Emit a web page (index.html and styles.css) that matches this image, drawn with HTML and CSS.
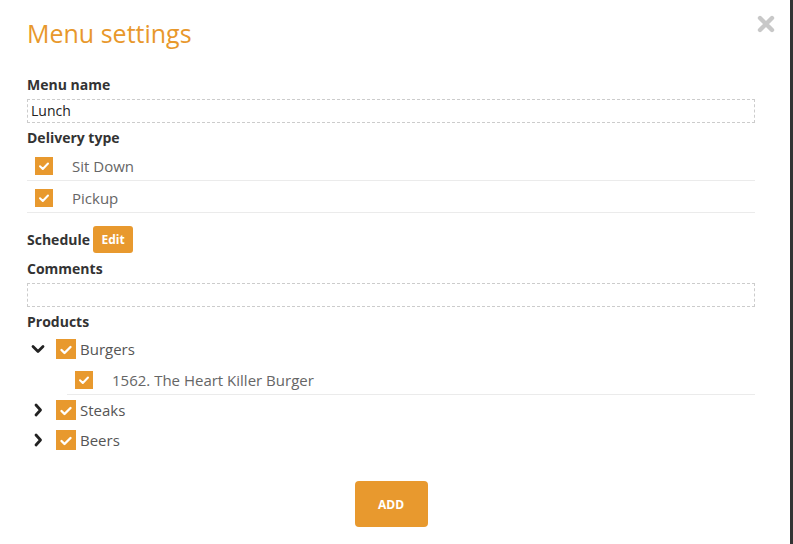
FILE: index.html
```html
<!DOCTYPE html>
<html>
<head>
<meta charset="utf-8">
<link rel="stylesheet" href="styles.css">
</head>
<body>
<div class="modal">
  <button class="close" aria-label="close">
    <svg width="18" height="18" viewBox="0 0 18 18"><path d="M3 3 L15 15 M15 3 L3 15" stroke="#c8c8c8" stroke-width="4.4" stroke-linecap="round"/></svg>
  </button>
  <h1 class="title">Menu settings</h1>

  <div class="label lbl-first">Menu name</div>
  <div class="input">Lunch</div>

  <div class="label lbl-delivery">Delivery type</div>
  <div class="row row-first">
    <span class="cb"><svg width="18" height="18" viewBox="0 0 18 18"><path d="M5 9.2 L7.8 12 L13 6.5" fill="none" stroke="#fff" stroke-width="2" stroke-linecap="round" stroke-linejoin="round"/></svg></span>
    <span class="row-text">Sit Down</span>
  </div>
  <div class="row">
    <span class="cb"><svg width="18" height="18" viewBox="0 0 18 18"><path d="M5 9.2 L7.8 12 L13 6.5" fill="none" stroke="#fff" stroke-width="2" stroke-linecap="round" stroke-linejoin="round"/></svg></span>
    <span class="row-text">Pickup</span>
  </div>

  <div class="schedule">
    <span class="label">Schedule</span>
    <button class="edit">Edit</button>
  </div>

  <div class="label lbl-comments">Comments</div>
  <div class="input"></div>

  <div class="label lbl-products">Products</div>
  <div class="tree">
    <div class="node">
      <span class="chev"><svg width="14" height="10" viewBox="0 0 14 10"><path d="M2 2.5 L7 7.5 L12 2.5" fill="none" stroke="#222" stroke-width="2.8" stroke-linecap="round" stroke-linejoin="round"/></svg></span>
      <span class="cb cb-lg"><svg width="20" height="20" viewBox="0 0 20 20"><path d="M5.5 11 L8.5 14 L14.5 8" fill="none" stroke="#fff" stroke-width="2.4" stroke-linecap="round" stroke-linejoin="round"/></svg></span>
      <span class="node-text">Burgers</span>
    </div>
    <div class="row child">
      <span class="cb"><svg width="18" height="18" viewBox="0 0 18 18"><path d="M5 9.2 L7.8 12 L13 6.5" fill="none" stroke="#fff" stroke-width="2" stroke-linecap="round" stroke-linejoin="round"/></svg></span>
      <span class="row-text">1562. The Heart Killer Burger</span>
    </div>
    <div class="node">
      <span class="chev"><svg width="10" height="14" viewBox="0 0 10 14"><path d="M3 2 L7.5 7 L3 12" fill="none" stroke="#222" stroke-width="2.8" stroke-linecap="round" stroke-linejoin="round"/></svg></span>
      <span class="cb cb-lg"><svg width="20" height="20" viewBox="0 0 20 20"><path d="M5.5 11 L8.5 14 L14.5 8" fill="none" stroke="#fff" stroke-width="2.4" stroke-linecap="round" stroke-linejoin="round"/></svg></span>
      <span class="node-text">Steaks</span>
    </div>
    <div class="node">
      <span class="chev"><svg width="10" height="14" viewBox="0 0 10 14"><path d="M3 2 L7.5 7 L3 12" fill="none" stroke="#222" stroke-width="2.8" stroke-linecap="round" stroke-linejoin="round"/></svg></span>
      <span class="cb cb-lg"><svg width="20" height="20" viewBox="0 0 20 20"><path d="M5.5 11 L8.5 14 L14.5 8" fill="none" stroke="#fff" stroke-width="2.4" stroke-linecap="round" stroke-linejoin="round"/></svg></span>
      <span class="node-text">Beers</span>
    </div>
  </div>

  <div class="actions">
    <button class="add">ADD</button>
  </div>
</div>
</body>
</html>
```
FILE: styles.css
```css
* { box-sizing: border-box; }
html, body { margin: 0; padding: 0; background: #fff; }
body {
  font-family: "Open Sans", "Liberation Sans", sans-serif;
  font-size: 14px;
  color: #333;
  width: 793px;
  height: 544px;
  overflow: hidden;
}
.modal {
  position: relative;
  width: 793px;
  height: 544px;
  padding: 18px 35px 0 27px;
  border-right: 3px solid #333;
  background: #fff;
}
.close {
  position: absolute;
  top: 15px;
  right: 15px;
  padding: 0;
  border: 0;
  background: none;
  width: 18px;
  height: 18px;
  display: block;
}
.close svg { display: block; }
.title {
  margin: 0;
  font-size: 25px;
  line-height: 30px;
  font-weight: 400;
  color: #e8982c;
}
.label {
  font-weight: 700;
  font-size: 14px;
  line-height: 20px;
  color: #333;
}
.lbl-first { margin-top: 27px; }
.lbl-delivery { margin-top: 5px; }
.lbl-comments { margin-top: 6px; }
.lbl-products { margin-top: 5px; }
.input {
  margin-top: 4px;
  height: 24px;
  border: 1px dashed #ccc;
  padding: 0 3px;
  line-height: 22px;
  font-size: 14px;
  color: #222;
}
.row {
  display: flex;
  align-items: flex-start;
  gap: 19px;
  padding: 8px 0 5px 8px;
  height: 32px;
  border-bottom: 1px solid #ebebeb;
}
.row-first { margin-top: 1px; }
.cb {
  width: 18px;
  height: 18px;
  background: #e8992e;
  display: block;
  flex: none;
}
.cb svg { display: block; }
.cb-lg { width: 20px; height: 20px; }
.row-text {
  line-height: 19px;
  font-size: 15px;
  color: #666;
}
.schedule {
  display: flex;
  align-items: center;
  gap: 3px;
  margin-top: 13px;
  height: 27px;
}
.edit {
  height: 27px;
  width: 40px;
  border: 0;
  border-radius: 3px;
  background: #e8992e;
  color: #fff;
  font-family: "Open Sans", "Liberation Sans", sans-serif;
  font-weight: 700;
  font-size: 12px;
  padding: 0;
}
.tree { margin-top: 2px; }
.node {
  display: flex;
  align-items: center;
  height: 30px;
}
.chev {
  width: 21px;
  display: flex;
  justify-content: center;
  margin-right: 8px;
}
.chev svg { display: block; }
.node-text {
  margin-left: 4px;
  color: #555;
  font-size: 15px;
}
.row.child {
  margin-left: 40px;
  height: 31px;
  padding-top: 7px;
}
.actions {
  display: flex;
  justify-content: center;
  margin-top: 26px;
}
.add {
  width: 73px;
  height: 46px;
  border: 0;
  border-radius: 4px;
  background: #e8992e;
  color: #fff;
  font-family: "Open Sans", "Liberation Sans", sans-serif;
  font-weight: 700;
  font-size: 12px;
  padding: 0;
}
```
